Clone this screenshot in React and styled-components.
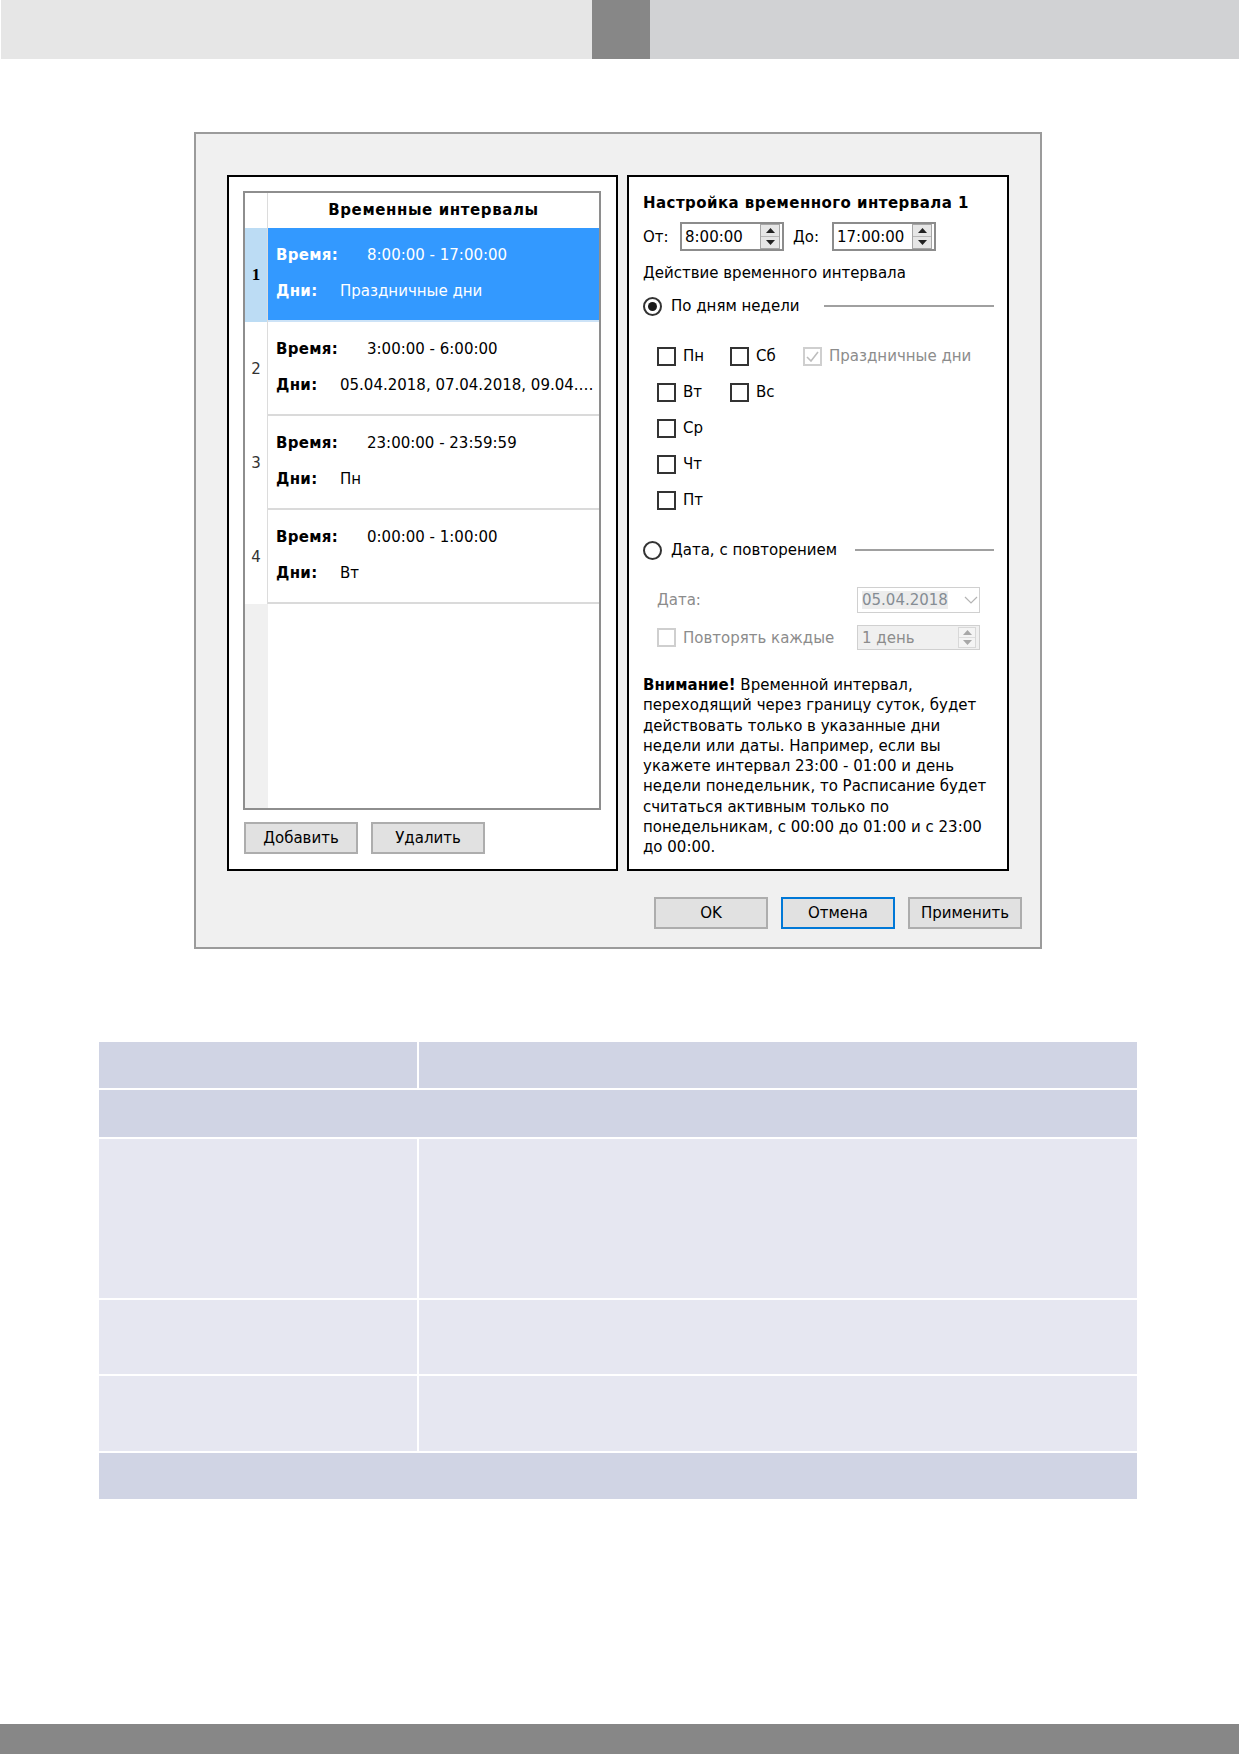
// Schedule dialog: time intervals list, interval settings and a blank spec table
import React from "react"
import styled, { createGlobalStyle } from "styled-components"

const GlobalStyle = createGlobalStyle`
    html,
    body {
        margin: 0;
        padding: 0;
        background: #fff;
    }

    body {
        font-family: "DejaVu Sans", "Noto Sans", sans-serif;
        font-size: 15px;
        color: #000;
    }

    * {
        box-sizing: border-box;
    }
`

// Data
const intervals = [
    { id: 1, time: "8:00:00 - 17:00:00", days: "Праздничные дни", selected: true },
    { id: 2, time: "3:00:00 - 6:00:00", days: "05.04.2018, 07.04.2018, 09.04.2018" },
    { id: 3, time: "23:00:00 - 23:59:59", days: "Пн" },
    { id: 4, time: "0:00:00 - 1:00:00", days: "Вт" },
]

const weekRows = [
    [{ label: "Пн" }, { label: "Сб" }, { label: "Праздничные дни", checked: true, disabled: true }],
    [{ label: "Вт" }, { label: "Вс" }],
    [{ label: "Ср" }],
    [{ label: "Чт" }],
    [{ label: "Пт" }],
]

const tableRows = [
    { height: 46, tone: "head" },
    { height: 47, tone: "head", span: true },
    { height: 159, tone: "body" },
    { height: 74, tone: "body" },
    { height: 75, tone: "body" },
    { height: 46, tone: "head", span: true },
]

// Page frame
const Page = styled.div`
    display: flex;
    flex-direction: column;
    width: 1239px;
    height: 1754px;
`

const TopBar = styled.div`
    display: flex;
    height: 59px;
`

const TopSegment = styled.div`
    width: ${({ $width }) => ($width ? `${$width}px` : "auto")};
    flex: ${({ $width }) => ($width ? "none" : 1)};
    background: ${({ $color }) => $color};
    border-left: ${({ $edge }) => ($edge ? "1px solid #fff" : "none")};
`

const BottomBar = styled.div`
    margin-top: auto;
    height: 30px;
    background: #878787;
`

// Dialog
const Dialog = styled.div`
    display: flex;
    flex-direction: column;
    width: 848px;
    height: 817px;
    margin: 73px 0 0 194px;
    padding: 41px 18px 0 31px;
    background: #f0f0f0;
    border: 2px solid #9b9b9b;
`

const Panels = styled.div`
    display: flex;
    gap: 9px;
    height: 696px;
    margin-right: 13px;
`

const ListPanel = styled.div`
    display: flex;
    flex-direction: column;
    gap: 12px;
    width: 391px;
    padding: 14px 15px 15px 14px;
    background: #fff;
    border: 2px solid #000;
`

const IntervalGrid = styled.div`
    flex: 1;
    display: flex;
    flex-direction: column;
    border: 2px solid #8e8e8e;
    background: #fff;
`

const GridHead = styled.div`
    display: flex;
    height: 35px;
`

const Corner = styled.div`
    width: 23px;
    border-right: 1px solid #dcdcdc;
`

const HeadTitle = styled.div`
    flex: 1;
    font-weight: 700;
    letter-spacing: 0.6px;
    line-height: 35px;
    text-align: center;
`

const IntervalRow = styled.div`
    display: flex;
    height: 94px;
    color: ${({ $selected }) => ($selected ? "#fff" : "#000")};
`

const RowNumber = styled.div`
    display: flex;
    align-items: center;
    justify-content: center;
    width: 23px;
    background: ${({ $selected }) => ($selected ? "#bcdcf4" : "#fff")};
    border-right: 1px solid #dcdcdc;
    color: ${({ $selected }) => ($selected ? "#000" : "#333")};
    font-family: ${({ $selected }) =>
        $selected ? '"Liberation Serif", serif' : "inherit"};
    font-weight: ${({ $selected }) => ($selected ? 700 : 400)};
    font-size: ${({ $selected }) => ($selected ? "17px" : "15px")};
`

const RowBody = styled.div`
    flex: 1;
    min-width: 0;
    padding: 17px 3px 0 8px;
    background: ${({ $selected }) => ($selected ? "#3399ff" : "#fff")};
    border-bottom: 2px solid ${({ $selected }) => ($selected ? "#cde3f7" : "#dadada")};
`

const RowLine = styled.div`
    display: flex;
    line-height: 20px;
    white-space: nowrap;

    & + & {
        margin-top: 16px;
    }
`

const RowLabel = styled.span`
    flex: none;
    width: ${({ $width }) => $width}px;
    font-weight: 700;
    letter-spacing: 0.3px;
`

const RowValue = styled.span`
    overflow: hidden;
    text-overflow: ellipsis;
`

const GridFill = styled.div`
    flex: 1;
    display: flex;
`

const FillHead = styled.div`
    width: 23px;
    background: #f0f0f0;
`

const ButtonRow = styled.div`
    display: flex;
    justify-content: ${({ $end }) => ($end ? "flex-end" : "flex-start")};
    gap: 13px;
    margin-top: ${({ $top }) => $top || 0}px;
    padding-left: ${({ $indent }) => $indent || 0}px;
`

const Button = styled.button`
    width: 114px;
    height: 32px;
    padding: 0;
    background: #e1e1e1;
    border: 2px solid ${({ $focused }) => ($focused ? "#0078d7" : "#adadad")};
    font: inherit;
    color: #000;
`

// Settings panel
const SettingsPanel = styled.div`
    display: flex;
    flex-direction: column;
    width: 382px;
    padding: 16px 13px 0 14px;
    background: #fff;
    border: 2px solid #000;
`

const Title = styled.div`
    font-weight: 700;
    letter-spacing: 0.45px;
    line-height: 20px;
`

const SpinRow = styled.div`
    display: flex;
    align-items: center;
    height: 29px;
    margin-top: 9px;
`

const FieldLabel = styled.span`
    width: ${({ $width }) => $width}px;
    padding-left: ${({ $indent }) => $indent || 0}px;
`

const SpinBox = styled.div`
    display: flex;
    align-items: center;
    justify-content: space-between;
    width: 104px;
    height: 29px;
    padding-left: 3px;
    border: 2px solid #8c8c8c;
`

const SpinButtons = styled.div`
    display: flex;
    flex-direction: column;
    width: ${({ $disabled }) => ($disabled ? 18 : 20)}px;
    height: ${({ $disabled }) => ($disabled ? 21 : 25)}px;
    margin-right: 2px;
    background: ${({ $disabled }) => ($disabled ? "#f4f4f4" : "#e6e6e6")};
    border: 1px solid ${({ $disabled }) => ($disabled ? "#d8d8d8" : "#a6a6a6")};

    & > span {
        flex: 1;
        display: flex;
        align-items: center;
        justify-content: center;
    }

    & > span + span {
        border-top: 1px solid ${({ $disabled }) => ($disabled ? "#dedede" : "#b8b8b8")};
    }
`

const Caption = styled.div`
    margin-top: 12px;
    line-height: 20px;
`

const GroupRow = styled.div`
    display: flex;
    align-items: center;
    height: 24px;
    margin-top: ${({ $top }) => $top}px;
`

const GroupCaption = styled.label`
    display: flex;
    align-items: center;
    gap: 9px;
    width: ${({ $width }) => $width}px;
    white-space: nowrap;
`

const Radio = styled.span`
    display: flex;
    align-items: center;
    justify-content: center;
    width: 19px;
    height: 19px;
    border: 2px solid #333;
    border-radius: 50%;

    &::after {
        content: "";
        display: ${({ $checked }) => ($checked ? "block" : "none")};
        width: 9px;
        height: 9px;
        border-radius: 50%;
        background: #1a1a1a;
    }
`

const GroupLine = styled.div`
    flex: 1;
    height: 2px;
    background: #a0a0a0;
`

const DayList = styled.div`
    margin-top: 20px;
    padding-left: 14px;
`

const DayRow = styled.div`
    display: grid;
    grid-template-columns: 73px 73px auto;
    align-items: center;
    height: 36px;
`

const CheckItem = styled.label`
    display: flex;
    align-items: center;
    gap: 7px;
    color: ${({ $disabled }) => ($disabled ? "#8c8c8c" : "#000")};
    white-space: nowrap;
`

const CheckBox = styled.span`
    display: flex;
    align-items: center;
    justify-content: center;
    width: 19px;
    height: 19px;
    border: 2px solid ${({ $disabled }) => ($disabled ? "#cfcfcf" : "#333")};
`

const FieldRow = styled.div`
    display: grid;
    grid-template-columns: 200px 123px;
    align-items: center;
    height: ${({ $height }) => $height}px;
    margin-top: ${({ $top }) => $top}px;
    padding-left: 14px;
    color: #8c8c8c;
`

const DisabledField = styled.div`
    display: flex;
    align-items: center;
    justify-content: space-between;
    height: 100%;
    padding: 0 1px 0 4px;
    background: ${({ $filled }) => ($filled ? "#f0f0f0" : "#fff")};
    border: 1px solid #d0d0d0;
`

const DateText = styled.span`
    background: #ececec;
    color: #858c94;
`

const Notice = styled.p`
    margin: 25px 0 0;
    line-height: 20.3px;

    & b {
        font-weight: 700;
    }
`

// Spec table below the dialog
const SpecTable = styled.div`
    display: grid;
    grid-template-columns: 318px 718px;
    gap: 2px;
    width: 1038px;
    margin: 93px 0 0 99px;
`

const SpecCell = styled.div`
    height: ${({ $height }) => $height}px;
    grid-column: ${({ $span }) => ($span ? "1 / -1" : "auto")};
    background: ${({ $tone }) => ($tone === "head" ? "#d0d4e4" : "#e6e7f1")};
`

function Arrow({ up, color = "#222" }) {
    return (
        <svg width="9" height="5" viewBox="0 0 9 5">
            <polygon points={up ? "4.5,0 9,5 0,5" : "0,0 9,0 4.5,5"} fill={color} />
        </svg>
    )
}

function Spinner({ disabled }) {
    const color = disabled ? "#a8a8a8" : "#222"

    return (
        <SpinButtons $disabled={disabled}>
            <span>
                <Arrow up color={color} />
            </span>
            <span>
                <Arrow color={color} />
            </span>
        </SpinButtons>
    )
}

function Check({ label, checked, disabled }) {
    return (
        <CheckItem $disabled={disabled}>
            <CheckBox $disabled={disabled}>
                {checked && (
                    <svg width="13" height="11" viewBox="0 0 13 11">
                        <polyline
                            points="1,6 5,10 12,1"
                            fill="none"
                            stroke="#bdbdbd"
                            strokeWidth="1.6"
                        />
                    </svg>
                )}
            </CheckBox>
            {label}
        </CheckItem>
    )
}

function IntervalList() {
    return (
        <ListPanel>
            <IntervalGrid>
                <GridHead>
                    <Corner />
                    <HeadTitle>Временные интервалы</HeadTitle>
                </GridHead>

                {intervals.map(item => (
                    <IntervalRow key={item.id} $selected={item.selected}>
                        <RowNumber $selected={item.selected}>{item.id}</RowNumber>

                        <RowBody $selected={item.selected}>
                            <RowLine>
                                <RowLabel $width={91}>Время:</RowLabel>
                                <RowValue>{item.time}</RowValue>
                            </RowLine>

                            <RowLine>
                                <RowLabel $width={64}>Дни:</RowLabel>
                                <RowValue>{item.days}</RowValue>
                            </RowLine>
                        </RowBody>
                    </IntervalRow>
                ))}

                <GridFill>
                    <FillHead />
                </GridFill>
            </IntervalGrid>

            <ButtonRow $indent={1}>
                <Button>Добавить</Button>
                <Button>Удалить</Button>
            </ButtonRow>
        </ListPanel>
    )
}

function IntervalSettings() {
    return (
        <SettingsPanel>
            <Title>Настройка временного интервала 1</Title>

            <SpinRow>
                <FieldLabel $width={37}>От:</FieldLabel>
                <SpinBox>
                    8:00:00
                    <Spinner />
                </SpinBox>

                <FieldLabel $width={48} $indent={9}>
                    До:
                </FieldLabel>
                <SpinBox>
                    17:00:00
                    <Spinner />
                </SpinBox>
            </SpinRow>

            <Caption>Действие временного интервала</Caption>

            <GroupRow $top={11}>
                <GroupCaption $width={181}>
                    <Radio $checked />
                    По дням недели
                </GroupCaption>
                <GroupLine />
            </GroupRow>

            <DayList>
                {weekRows.map((row, i) => (
                    <DayRow key={i}>
                        {row.map(day => (
                            <Check key={day.label} {...day} />
                        ))}
                    </DayRow>
                ))}
            </DayList>

            <GroupRow $top={20}>
                <GroupCaption $width={212}>
                    <Radio />
                    Дата, с повторением
                </GroupCaption>
                <GroupLine />
            </GroupRow>

            <FieldRow $height={26} $top={25}>
                <span>Дата:</span>
                <DisabledField>
                    <DateText>05.04.2018</DateText>
                    <svg width="14" height="8" viewBox="0 0 14 8">
                        <polyline
                            points="1,1 7,7 13,1"
                            fill="none"
                            stroke="#b4b4b4"
                            strokeWidth="1.2"
                        />
                    </svg>
                </DisabledField>
            </FieldRow>

            <FieldRow $height={25} $top={12}>
                <Check label="Повторять каждые" disabled />
                <DisabledField $filled>
                    1 день
                    <Spinner disabled />
                </DisabledField>
            </FieldRow>

            <Notice>
                <b>Внимание!</b> Временной интервал, переходящий через границу
                суток, будет действовать только в указанные дни недели или
                даты. Например, если вы укажете интервал 23:00 - 01:00 и день
                недели понедельник, то Расписание будет считаться активным
                только по понедельникам, с 00:00 до 01:00 и с 23:00 до 00:00.
            </Notice>
        </SettingsPanel>
    )
}

export default function App() {
    return (
        <Page>
            <GlobalStyle />

            <TopBar>
                <TopSegment $width={592} $color="#e6e6e6" $edge />
                <TopSegment $width={58} $color="#878787" />
                <TopSegment $color="#d1d2d4" />
            </TopBar>

            <Dialog>
                <Panels>
                    <IntervalList />
                    <IntervalSettings />
                </Panels>

                <ButtonRow $end $top={26}>
                    <Button>OK</Button>
                    <Button $focused>Отмена</Button>
                    <Button>Применить</Button>
                </ButtonRow>
            </Dialog>

            <SpecTable>
                {tableRows.map((row, i) =>
                    row.span ? (
                        <SpecCell key={i} $height={row.height} $tone={row.tone} $span />
                    ) : (
                        <React.Fragment key={i}>
                            <SpecCell $height={row.height} $tone={row.tone} />
                            <SpecCell $height={row.height} $tone={row.tone} />
                        </React.Fragment>
                    )
                )}
            </SpecTable>

            <BottomBar />
        </Page>
    )
}
